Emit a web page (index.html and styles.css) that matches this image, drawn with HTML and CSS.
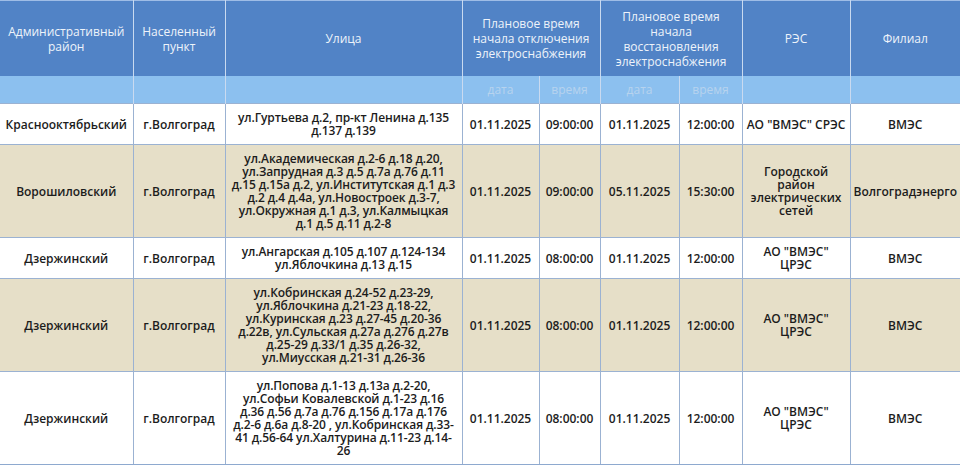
FILE: index.html
```html
<!DOCTYPE html>
<html lang="ru">
<head>
<meta charset="utf-8">
<link rel="stylesheet" href="styles.css">
<title>Отключения</title>
</head>
<body>
<table class="grid">
  <colgroup>
    <col class="c-rayon"><col class="c-punkt"><col class="c-street">
    <col class="c-d1"><col class="c-t1"><col class="c-d2"><col class="c-t2">
    <col class="c-res"><col class="c-fil">
  </colgroup>
  <thead>
    <tr class="head">
      <th>Административный<br>район</th>
      <th>Населенный<br>пункт</th>
      <th>Улица</th>
      <th colspan="2">Плановое время<br>начала отключения<br>электроснабжения</th>
      <th colspan="2">Плановое время<br>начала<br>восстановления<br>электроснабжения</th>
      <th>РЭС</th>
      <th>Филиал</th>
    </tr>
    <tr class="sub">
      <th></th><th></th><th></th>
      <th>дата</th><th>время</th><th>дата</th><th>время</th>
      <th></th><th></th>
    </tr>
  </thead>
  <tbody>
    <tr class="short">
      <td>Краснооктябрьский</td>
      <td>г.Волгоград</td>
      <td class="street">ул.Гуртьева д.2, пр-кт Ленина д.135<br>д.137 д.139</td>
      <td>01.11.2025</td><td>09:00:00</td><td>01.11.2025</td><td>12:00:00</td>
      <td class="nw">АО "ВМЭС" СРЭС</td>
      <td>ВМЭС</td>
    </tr>
    <tr class="tall alt">
      <td>Ворошиловский</td>
      <td>г.Волгоград</td>
      <td class="street">ул.Академическая д.2-6 д.18 д.20,<br>ул.Запрудная д.3 д.5 д.7а д.76 д.11<br>д.15 д.15а д.2, ул.Институтская д.1 д.3<br>д.2 д.4 д.4а, ул.Новостроек д.3-7,<br>ул.Окружная д.1 д.3, ул.Калмыцкая<br>д.1 д.5 д.11 д.2-8</td>
      <td>01.11.2025</td><td>09:00:00</td><td>05.11.2025</td><td>15:30:00</td>
      <td>Городской<br>район<br>электрических<br>сетей</td>
      <td>Волгоградэнерго</td>
    </tr>
    <tr class="short">
      <td>Дзержинский</td>
      <td>г.Волгоград</td>
      <td class="street">ул.Ангарская д.105 д.107 д.124-134<br>ул.Яблочкина д.13 д.15</td>
      <td>01.11.2025</td><td>08:00:00</td><td>01.11.2025</td><td>12:00:00</td>
      <td>АО "ВМЭС"<br>ЦРЭС</td>
      <td>ВМЭС</td>
    </tr>
    <tr class="tall alt">
      <td>Дзержинский</td>
      <td>г.Волгоград</td>
      <td class="street">ул.Кобринская д.24-52 д.23-29,<br>ул.Яблочкина д.21-23 д.18-22,<br>ул.Куринская д.23 д.27-45 д.20-36<br>д.22в, ул.Сульская д.27а д.276 д.27в<br>д.25-29 д.33/1 д.35 д.26-32,<br>ул.Миусская д.21-31 д.26-36</td>
      <td>01.11.2025</td><td>08:00:00</td><td>01.11.2025</td><td>12:00:00</td>
      <td>АО "ВМЭС"<br>ЦРЭС</td>
      <td>ВМЭС</td>
    </tr>
    <tr class="tall">
      <td>Дзержинский</td>
      <td>г.Волгоград</td>
      <td class="street">ул.Попова д.1-13 д.13а д.2-20,<br>ул.Софьи Ковалевской д.1-23 д.16<br>д.36 д.56 д.7а д.76 д.156 д.17а д.176<br>д.2-6 д.6а д.8-20 , ул.Кобринская д.33-<br>41 д.56-64 ул.Халтурина д.11-23 д.14-<br>26</td>
      <td>01.11.2025</td><td>08:00:00</td><td>01.11.2025</td><td>12:00:00</td>
      <td>АО "ВМЭС"<br>ЦРЭС</td>
      <td>ВМЭС</td>
    </tr>
  </tbody>
</table>
</body>
</html>
```
FILE: styles.css
```css
html, body {
  margin: 0;
  padding: 0;
  background: #ffffff;
}

.grid {
  width: 960px;
  table-layout: fixed;
  border-collapse: collapse;
  font-family: "Open Sans", "DejaVu Sans", sans-serif;
  font-size: 12px;
}

.c-rayon { width: 133px; }
.c-punkt { width: 92px; }
.c-street { width: 237px; }
.c-d1 { width: 77px; }
.c-t1 { width: 61px; }
.c-d2 { width: 79px; }
.c-t2 { width: 63px; }
.c-res { width: 108px; }
.c-fil { width: 110px; }

.grid th {
  font-weight: 400;
  text-align: center;
  vertical-align: middle;
  padding: 0 2px;
  border-left: 1px solid #c9daf0;
  border-right: 1px solid #c9daf0;
}

.head th {
  height: 75px;
  background: #5183c6;
  color: #eef3fa;
  line-height: 15px;
  border-top: 1px solid #9fbde6;
}

.sub th {
  height: 27px;
  background: #8cc0ef;
  color: #b7d3ee;
  line-height: 15px;
}

.grid td {
  text-align: center;
  vertical-align: middle;
  padding: 0 2px;
  color: #1c1c1c;
  font-weight: 600;
  line-height: 13px;
  border: 1px solid #9bb2d2;
  white-space: nowrap;
}

.grid td:first-child,
.grid th:first-child {
  border-left: none;
}

.grid td:last-child,
.grid th:last-child {
  border-right: none;
}

.short td { height: 40px; }
.tall td { height: 92px; }

.alt td { background: #e6dfc8; }

.street {
  letter-spacing: -0.1px;
}

.grid tbody tr:last-child td {
  border-bottom: 2px solid #8ea9cf;
}
```
